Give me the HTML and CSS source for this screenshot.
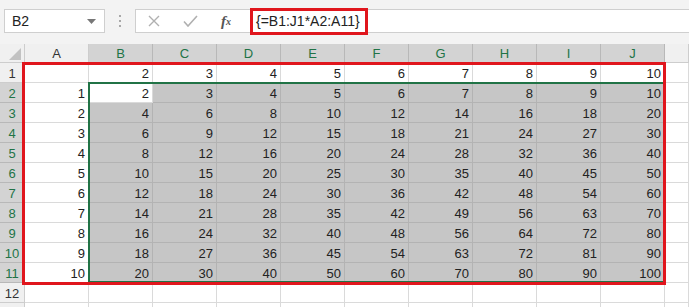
FILE: index.html
```html
<!DOCTYPE html>
<html lang="en">
<head>
    <meta charset="UTF-8">
    <title>Array formula</title>
    <link rel="stylesheet" href="styles.css">
</head>
<body>
    <div class="formula-bar">
        <div class="name-box">
            <span>B2</span>
            <svg class="caret" width="9" height="5" viewBox="0 0 9 5"><path d="M0 0h9L4.5 5z" fill="#777"/></svg>
        </div>
        <div class="dots"><i></i><i></i><i></i></div>
        <div class="fx-box">
            <span class="btn">
                <svg width="12" height="12" viewBox="0 0 12 12"><path d="M1 1l10 10M11 1L1 11" stroke="#b0b0b0" stroke-width="1.4" fill="none"/></svg>
            </span>
            <span class="btn">
                <svg width="15" height="12" viewBox="0 0 15 12"><path d="M1 6.5l4 4.5L14 1" stroke="#b0b0b0" stroke-width="1.6" fill="none"/></svg>
            </span>
            <span class="btn fx">f<sub>x</sub></span>
            <span class="formula">{=B1:J1*A2:A11}</span>
        </div>
    </div>

    <div class="sheet">
        <div class="grid">
            <div class="h corner"><span class="tri"></span></div>
            <div class="h">A</div>
            <div class="h hs">B</div>
            <div class="h hs">C</div>
            <div class="h hs">D</div>
            <div class="h hs">E</div>
            <div class="h hs">F</div>
            <div class="h hs">G</div>
            <div class="h hs">H</div>
            <div class="h hs">I</div>
            <div class="h hs">J</div>
            <div class="h last"></div>

            <div class="rh">1</div>
            <div class="c"></div>
            <div class="c">2</div><div class="c">3</div><div class="c">4</div><div class="c">5</div><div class="c">6</div><div class="c">7</div><div class="c">8</div><div class="c">9</div><div class="c">10</div>
            <div class="c"></div>

            <div class="rh rs">2</div>
            <div class="c">1</div>
            <div class="c">2</div><div class="c s">3</div><div class="c s">4</div><div class="c s">5</div><div class="c s">6</div><div class="c s">7</div><div class="c s">8</div><div class="c s">9</div><div class="c s">10</div>
            <div class="c"></div>

            <div class="rh rs">3</div>
            <div class="c">2</div>
            <div class="c s">4</div><div class="c s">6</div><div class="c s">8</div><div class="c s">10</div><div class="c s">12</div><div class="c s">14</div><div class="c s">16</div><div class="c s">18</div><div class="c s">20</div>
            <div class="c"></div>

            <div class="rh rs">4</div>
            <div class="c">3</div>
            <div class="c s">6</div><div class="c s">9</div><div class="c s">12</div><div class="c s">15</div><div class="c s">18</div><div class="c s">21</div><div class="c s">24</div><div class="c s">27</div><div class="c s">30</div>
            <div class="c"></div>

            <div class="rh rs">5</div>
            <div class="c">4</div>
            <div class="c s">8</div><div class="c s">12</div><div class="c s">16</div><div class="c s">20</div><div class="c s">24</div><div class="c s">28</div><div class="c s">32</div><div class="c s">36</div><div class="c s">40</div>
            <div class="c"></div>

            <div class="rh rs">6</div>
            <div class="c">5</div>
            <div class="c s">10</div><div class="c s">15</div><div class="c s">20</div><div class="c s">25</div><div class="c s">30</div><div class="c s">35</div><div class="c s">40</div><div class="c s">45</div><div class="c s">50</div>
            <div class="c"></div>

            <div class="rh rs">7</div>
            <div class="c">6</div>
            <div class="c s">12</div><div class="c s">18</div><div class="c s">24</div><div class="c s">30</div><div class="c s">36</div><div class="c s">42</div><div class="c s">48</div><div class="c s">54</div><div class="c s">60</div>
            <div class="c"></div>

            <div class="rh rs">8</div>
            <div class="c">7</div>
            <div class="c s">14</div><div class="c s">21</div><div class="c s">28</div><div class="c s">35</div><div class="c s">42</div><div class="c s">49</div><div class="c s">56</div><div class="c s">63</div><div class="c s">70</div>
            <div class="c"></div>

            <div class="rh rs">9</div>
            <div class="c">8</div>
            <div class="c s">16</div><div class="c s">24</div><div class="c s">32</div><div class="c s">40</div><div class="c s">48</div><div class="c s">56</div><div class="c s">64</div><div class="c s">72</div><div class="c s">80</div>
            <div class="c"></div>

            <div class="rh rs">10</div>
            <div class="c">9</div>
            <div class="c s">18</div><div class="c s">27</div><div class="c s">36</div><div class="c s">45</div><div class="c s">54</div><div class="c s">63</div><div class="c s">72</div><div class="c s">81</div><div class="c s">90</div>
            <div class="c"></div>

            <div class="rh rs">11</div>
            <div class="c">10</div>
            <div class="c s">20</div><div class="c s">30</div><div class="c s">40</div><div class="c s">50</div><div class="c s">60</div><div class="c s">70</div><div class="c s">80</div><div class="c s">90</div><div class="c s">100</div>
            <div class="c"></div>

            <div class="rh">12</div>
            <div class="c"></div><div class="c"></div><div class="c"></div><div class="c"></div><div class="c"></div><div class="c"></div><div class="c"></div><div class="c"></div><div class="c"></div><div class="c"></div><div class="c"></div>

            <!-- row 13 only peeks in at the bottom edge -->
            <div class="rh"></div>
            <div class="c"></div><div class="c"></div><div class="c"></div><div class="c"></div><div class="c"></div><div class="c"></div><div class="c"></div><div class="c"></div><div class="c"></div><div class="c"></div><div class="c"></div>
        </div>

        <!-- selection outline and the red annotation lie over the grid -->
        <div class="selection"></div>
        <div class="callout"></div>
    </div>
</body>
</html>
```

FILE: styles.css
```css
:root {
    --bar: #f3f3f3;
    --head: #f0f0f0;
    --head-sel: #d3d3d3;
    --fill-sel: #c6c6c6;
    --grid: #dadada;
    --grid-sel: #b3b3b3;
    --green: #217346;
    --red: #e0161d;
}

body {
    margin: 0;
    width: 689px;
    height: 307px;
    overflow: hidden;
    background: #fff;
    font-family: 'Liberation Sans', Arial, sans-serif;
    color: #222;
}

/* Formelleiste */
.formula-bar {
    height: 44px;
    box-sizing: border-box;
    padding: 9px 0 0 4px;
    background: var(--bar);
    display: flex;
    align-items: flex-start;
}

.name-box {
    width: 101px;
    height: 24px;
    box-sizing: border-box;
    border: 1px solid #cfcfcf;
    background: #fff;
    display: flex;
    align-items: center;
    justify-content: space-between;
    padding: 0 8px 0 7px;
    font-size: 14px;
}

.dots {
    width: 30px;
    height: 24px;
    display: flex;
    flex-direction: column;
    align-items: center;
    justify-content: center;
    gap: 3px;
}

.dots i {
    width: 2px;
    height: 2px;
    background: #a8a8a8;
}

.fx-box {
    flex: 1;
    height: 24px;
    box-sizing: border-box;
    border: 1px solid #cfcfcf;
    border-right: none;
    background: #fff;
    display: flex;
    align-items: center;
}

.btn {
    width: 36px;
    display: flex;
    justify-content: center;
    align-items: center;
}

.fx {
    font-family: 'Liberation Serif', serif;
    font-style: italic;
    font-weight: bold;
    font-size: 15px;
    color: #555;
}

.fx sub {
    font-size: 10px;
    vertical-align: -2px;
}

.formula {
    margin-left: 6px;
    height: 27px;
    box-sizing: border-box;
    border: 3px solid var(--red);
    padding: 0 5px 0 3px;
    font-size: 14px;
    line-height: 21px;
}

/* Tabelle */
.sheet {
    position: relative;
}

.grid {
    display: grid;
    grid-template-columns: 25px repeat(10, 64px) 1fr;
    grid-template-rows: 19px;
    grid-auto-rows: 20px;
    font-size: 13px;
}

.grid > div {
    box-sizing: border-box;
    border-right: 1px solid var(--grid);
    border-bottom: 1px solid var(--grid);
}

.h {
    background: var(--head);
    text-align: center;
    line-height: 19px;
    color: #333;
    border-color: #cdcdcd !important;
}

.hs {
    background: var(--head-sel);
    color: var(--green);
    border-right-color: #b8b8b8 !important;
}

.corner {
    position: relative;
}

.tri {
    position: absolute;
    right: 3px;
    bottom: 2px;
    width: 0;
    height: 0;
    border-left: 12px solid transparent;
    border-bottom: 12px solid #c2c2c2;
}

.rh {
    background: var(--head);
    text-align: center;
    padding-top: 2px;
    line-height: 17px;
    color: #333;
    border-color: #cdcdcd !important;
}

.rs {
    background: var(--head-sel);
    color: var(--green);
    border-bottom-color: #b8b8b8 !important;
}

.c {
    text-align: right;
    padding: 2px 3px 0;
    line-height: 17px;
}

.c.s {
    background: var(--fill-sel);
    border-color: var(--grid-sel);
}

.selection {
    position: absolute;
    left: 88px;
    top: 38px;
    width: 577px;
    height: 201px;
    border: 2px solid var(--green);
    box-sizing: border-box;
}

.callout {
    position: absolute;
    left: 22px;
    top: 18px;
    width: 644px;
    height: 223px;
    border: 3px solid var(--red);
    box-sizing: border-box;
}
```
